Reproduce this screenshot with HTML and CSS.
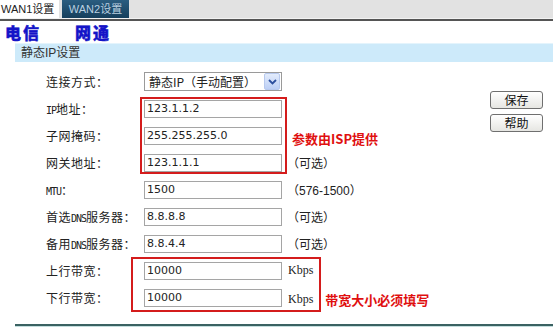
FILE: index.html
```html
<!DOCTYPE html>
<html lang="zh-CN">
<head>
<meta charset="UTF-8">
<title>WAN设置</title>
<link rel="stylesheet" href="styles.css">
</head>
<body>
<div class="tabs">
    <span class="tab active">WAN1设置</span>
    <span class="tab">WAN2设置</span>
</div>
<div class="carriers">
    <span class="carrier">电信</span>
    <span class="carrier">网通</span>
</div>
<div class="section-title">静态IP设置</div>
<div class="main">
    <div class="form">
        <label class="lbl r1">连接方式：</label>
        <div class="select r1">
            <span>静态IP（手动配置）</span>
            <span class="arrow">
                <svg width="9" height="6" viewBox="0 0 9 6"><path d="M1 1 L4.5 4.5 L8 1" fill="none" stroke="#2c4f9e" stroke-width="1.8"/></svg>
            </span>
        </div>

        <div class="redbox box-isp"></div>
        <label class="lbl r2"><span class="latin">IP</span>地址：</label>
        <input class="field r2" type="text" value="123.1.1.2">
        <label class="lbl r3">子网掩码：</label>
        <input class="field r3" type="text" value="255.255.255.0">
        <span class="note warn isp r3">参数由ISP提供</span>
        <label class="lbl r4">网关地址：</label>
        <input class="field r4" type="text" value="123.1.1.1">
        <span class="note r4">（可选）</span>

        <label class="lbl r5"><span class="latin">MTU</span>：</label>
        <input class="field r5" type="text" value="1500">
        <span class="note r5">（576-1500）</span>
        <label class="lbl r6">首选<span class="latin">DNS</span>服务器：</label>
        <input class="field r6" type="text" value="8.8.8.8">
        <span class="note r6">（可选）</span>
        <label class="lbl r7">备用<span class="latin">DNS</span>服务器：</label>
        <input class="field r7" type="text" value="8.8.4.4">
        <span class="note r7">（可选）</span>

        <div class="redbox box-bw"></div>
        <label class="lbl r8">上行带宽：</label>
        <input class="field r8" type="text" value="10000">
        <span class="note unit r8">Kbps</span>
        <label class="lbl r9">下行带宽：</label>
        <input class="field r9" type="text" value="10000">
        <span class="note unit r9">Kbps <span class="warn bw">带宽大小必须填写</span></span>
    </div>
    <div class="buttons">
        <button class="btn">保存</button>
        <button class="btn">帮助</button>
    </div>
</div>
<div class="bottom-line"></div>
</body>
</html>
```

FILE: styles.css
```css
body {
    margin: 0;
    width: 553px;
    height: 330px;
    overflow: hidden;
    background: #ffffff;
    font-family: "Liberation Sans", "Noto Sans CJK SC", sans-serif;
    font-size: 12px;
    color: #222222;
}
.tabs {
    height: 18px;
    background: #e2e2e2;
    border-bottom: 1px solid #f2f2f2;
    box-shadow: 0 2px 0 #555555;
    display: flex;
}
.tab {
    width: 67px;
    height: 18px;
    line-height: 18px;
    text-align: center;
    white-space: nowrap;
    font-size: 11px;
    color: #b9cfe0;
    background: linear-gradient(#2a5d80, #163f5c);
    margin-left: 3px;
}
.tab.active {
    width: 58px;
    margin-left: 0;
    color: #222222;
    background: #ffffff;
    text-align: left;
    padding-left: 1px;
}
.carriers {
    height: 22px;
    margin-top: 2px;
    padding-left: 5px;
    display: flex;
    gap: 34px;
    align-items: center;
}
.carrier {
    font-family: "Noto Sans CJK SC", sans-serif;
    font-size: 16px;
    font-weight: 900;
    color: #1414c8;
    letter-spacing: 2px;
    -webkit-text-stroke: 0.4px #1414c8;
}
.section-title {
    margin-left: 15px;
    height: 18px;
    line-height: 18px;
    padding-left: 6px;
    background: #cdeafa;
    border-top: 1px solid #e4f4fc;
    color: #333333;
}
.main {
    display: flex;
}
.form {
    display: grid;
    grid-template-columns: 98px 138px auto;
    grid-auto-rows: 27px;
    padding-left: 46px;
    margin-top: 6px;
    align-items: center;
}
.lbl {
    grid-column: 1;
    font-size: 12px;
    white-space: nowrap;
    letter-spacing: 0.5px;
    color: #222222;
}
.latin {
    font-family: "DejaVu Sans Mono", monospace;
    font-size: 10px;
    letter-spacing: -1px;
}
.field, .select {
    grid-column: 2;
    box-sizing: border-box;
    width: 138px;
    height: 18px;
    margin: 0;
    padding: 0 2px;
    border: 1px solid #a5a5a5;
    font-family: "DejaVu Sans", "Noto Sans CJK SC", sans-serif;
    font-size: 11px;
    color: #222222;
    background: #ffffff;
    position: relative;
    z-index: 1;
}
.select {
    height: 19px;
    display: flex;
    align-items: center;
    justify-content: space-between;
    padding: 0 1px 0 4px;
    border-color: #9a9a9a;
    font-family: "Noto Sans CJK SC", sans-serif;
    font-size: 12px;
}
.arrow {
    width: 14px;
    height: 15px;
    display: flex;
    align-items: center;
    justify-content: center;
    background: linear-gradient(#e3ecfc, #bccff5);
    border: 1px solid #b7c9ee;
    border-radius: 2px;
}
.note {
    grid-column: 3;
    padding-left: 5px;
    font-size: 12px;
    white-space: nowrap;
}
.unit {
    font-family: "Liberation Serif", serif;
    font-size: 12px;
    padding-left: 6px;
}
.warn {
    color: #e01010;
    font-family: "Noto Sans CJK SC", sans-serif;
    font-weight: 700;
    font-size: 13px;
}
.isp {
    padding-left: 10px;
    padding-top: 6px;
}
.bw {
    margin-left: 9px;
    position: relative;
    top: 2px;
}
.redbox {
    border: 2px solid #d41c1c;
    box-sizing: border-box;
    pointer-events: none;
}
.box-isp {
    grid-column: 2;
    grid-row: 2 / span 3;
    height: 77px;
    margin: 0 -5px 0 -4px;
    align-self: start;
    margin-top: 2px;
}
.box-bw {
    grid-column: 2 / span 2;
    grid-row: 8 / span 2;
    height: 55px;
    width: 190px;
    margin-left: -13px;
    align-self: start;
    margin-top: 0;
}
.r1 { grid-row: 1; }
.r2 { grid-row: 2; }
.r3 { grid-row: 3; }
.r4 { grid-row: 4; }
.r5 { grid-row: 5; }
.r6 { grid-row: 6; }
.r7 { grid-row: 7; }
.r8 { grid-row: 8; }
.r9 { grid-row: 9; }
.buttons {
    margin-left: auto;
    margin-right: 10px;
    margin-top: 29px;
    display: flex;
    flex-direction: column;
    gap: 5px;
}
.btn {
    width: 53px;
    height: 18px;
    padding: 0;
    font-family: "Noto Sans CJK SC", sans-serif;
    font-size: 12px;
    line-height: 14px;
    color: #111111;
    border: 1px solid #6f6f6f;
    border-radius: 3px;
    background: linear-gradient(#ffffff, #e6e6e2);
}
.bottom-line {
    margin-left: 15px;
    margin-top: 13px;
    height: 2px;
    background: #3b6262;
    border-bottom: 1px solid #c4dede;
}
```
